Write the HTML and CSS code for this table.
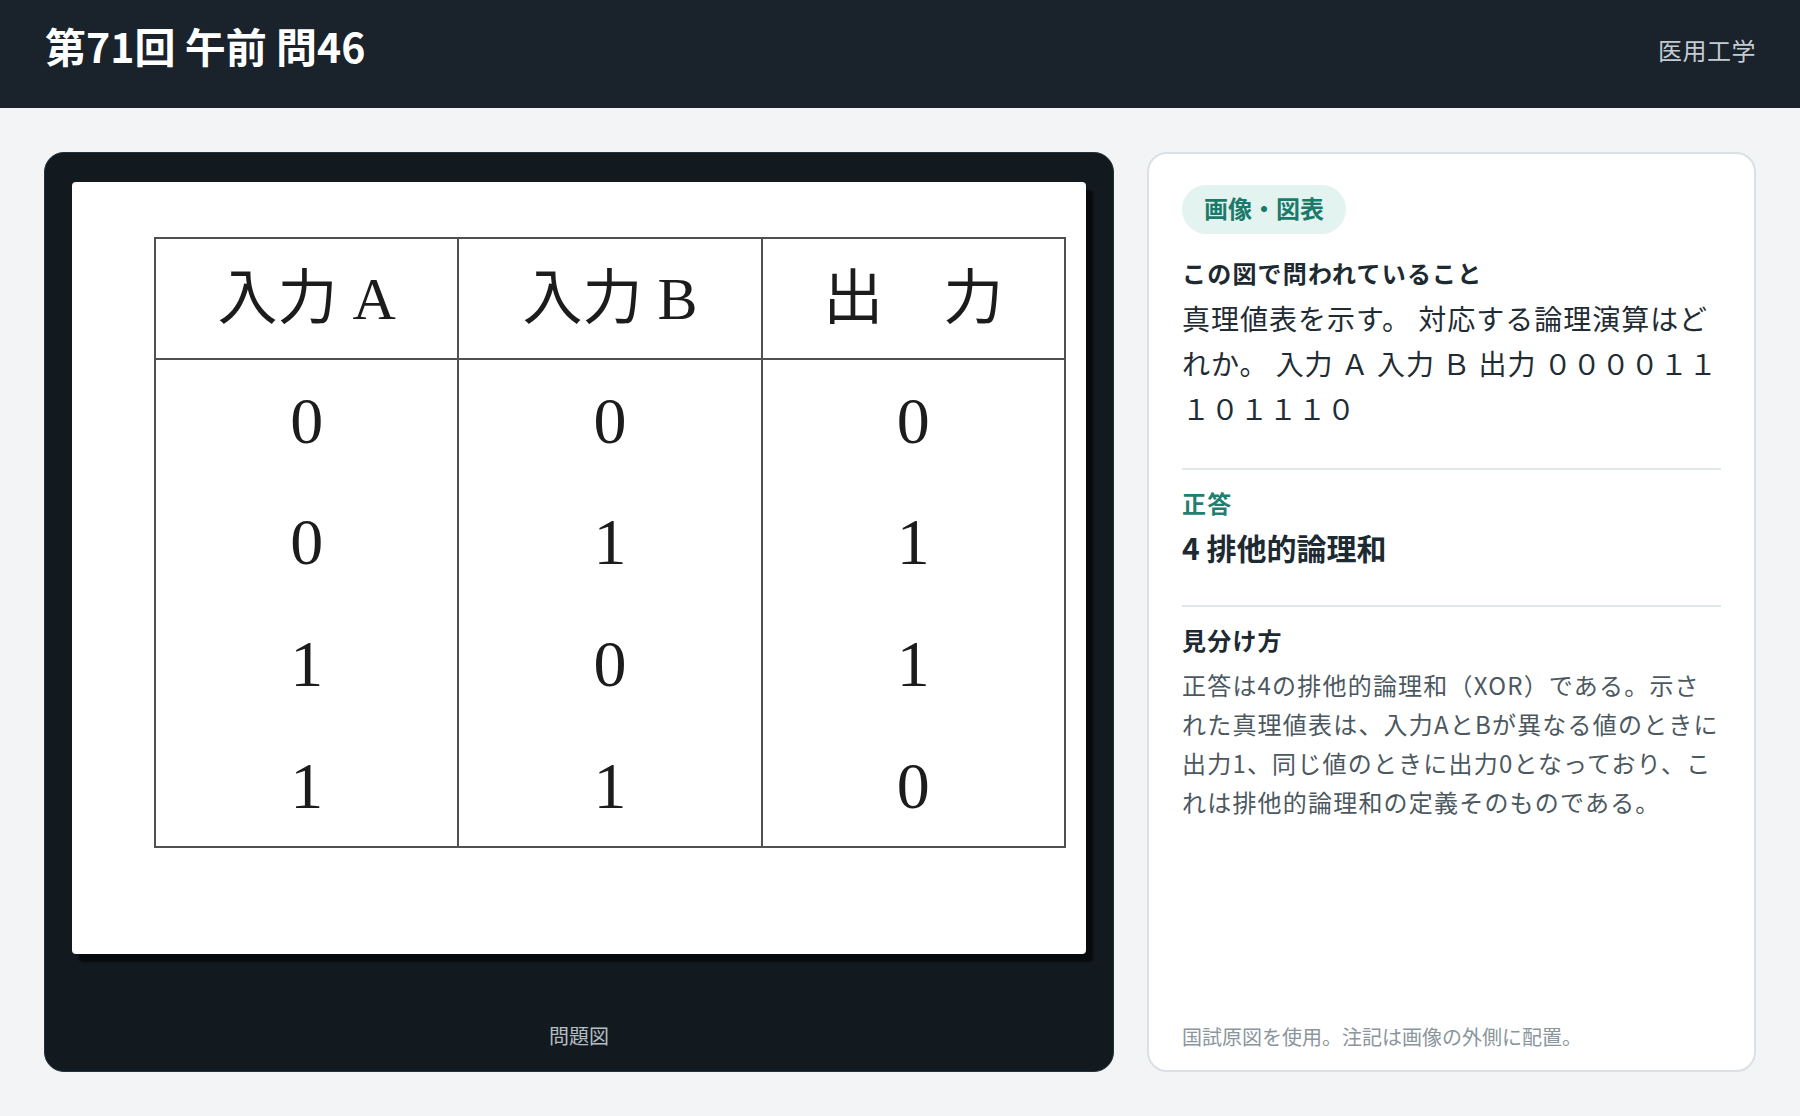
FILE: index.html
```html
<!DOCTYPE html>
<html lang="ja">
<head>
<meta charset="utf-8">
<title>第71回 午前 問46</title>
<link rel="stylesheet" href="styles.css">
</head>
<body>
<header class="topbar">
  <h1 class="title">第71回 午前 問46</h1>
  <span class="subject">医用工学</span>
</header>
<main class="main">
  <section class="viewer">
    <figure class="figure">
      <div class="sheet">
        <table class="truth">
          <thead>
            <tr><th>入力 A</th><th>入力 B</th><th>出　力</th></tr>
          </thead>
          <tbody>
            <tr><td>0</td><td>0</td><td>0</td></tr>
            <tr><td>0</td><td>1</td><td>1</td></tr>
            <tr><td>1</td><td>0</td><td>1</td></tr>
            <tr><td>1</td><td>1</td><td>0</td></tr>
          </tbody>
        </table>
      </div>
      <figcaption class="caption">問題図</figcaption>
    </figure>
  </section>
  <aside class="panel">
    <span class="badge">画像・図表</span>
    <h2 class="label">この図で問われていること</h2>
    <p class="question">真理値表を示す。 対応する論理演算はどれか。 入力 Ａ 入力 Ｂ 出力 ００００１１１０１１１０</p>
    <div class="section">
      <h2 class="label label-accent">正答</h2>
      <p class="answer">4 排他的論理和</p>
    </div>
    <div class="section">
      <h2 class="label">見分け方</h2>
      <p class="explain">正答は4の排他的論理和（XOR）である。示された真理値表は、入力AとBが異なる値のときに出力1、同じ値のときに出力0となっており、これは排他的論理和の定義そのものである。</p>
    </div>
    <p class="note">国試原図を使用。注記は画像の外側に配置。</p>
  </aside>
</main>
</body>
</html>
```
FILE: styles.css
```css
* { box-sizing: border-box; }
html, body { margin: 0; height: 100%; }
body {
  font-family: "Noto Sans CJK JP", "Noto Sans", sans-serif;
  background: #f2f4f6;
  display: flex;
  flex-direction: column;
  height: 100vh;
}
.topbar {
  flex: none;
  height: 108px;
  background: #1a232b;
  display: flex;
  align-items: center;
  justify-content: space-between;
  padding: 0 44px 0 45px;
}
.title {
  margin: 0 0 16px;
  font-size: 41px;
  font-weight: 700;
  line-height: 1.2;
  color: #ffffff;
}
.subject {
  font-size: 24px;
  line-height: 1.2;
  color: #c3ccd2;
  margin-bottom: 7px;
  letter-spacing: 0.02em;
}
.main {
  flex: 1;
  min-height: 0;
  display: grid;
  grid-template-columns: minmax(0, 1fr) 609px;
  gap: 33px;
  padding: 44px;
}
.viewer {
  background: #131a1f;
  border: 1px solid #25313a;
  border-radius: 20px;
  padding: 29px 27px 20px;
  display: flex;
  flex-direction: column;
}
.figure {
  margin: 0;
  flex: 1;
  display: flex;
  flex-direction: column;
}
.sheet {
  height: 772px;
  background: #ffffff;
  border-radius: 4px;
  box-shadow: 7px 8px 2px rgba(0, 0, 0, 0.6);
  padding: 55px 0 0 82px;
}
.truth {
  border-collapse: collapse;
  table-layout: fixed;
  width: 912px;
  border: 2px solid #505050;
}
.truth th, .truth td {
  border-left: 2px solid #505050;
  border-right: 2px solid #505050;
  text-align: center;
  vertical-align: middle;
  padding: 0;
  font-family: "Liberation Serif", "Noto Sans CJK JP", serif;
  font-weight: 400;
  color: #1c1c1c;
  line-height: 1;
}
.truth th {
  height: 121px;
  font-size: 60px;
  border-bottom: 2px solid #505050;
}
.truth td { height: 122px; font-size: 66px; }
.caption {
  margin-top: auto;
  text-align: center;
  font-size: 20px;
  line-height: 30px;
  color: #b4bec4;
}
.panel {
  background: #ffffff;
  border: 2px solid #d9e1e5;
  border-radius: 20px;
  padding: 31px 33px 18px;
  display: flex;
  flex-direction: column;
}
.badge {
  align-self: flex-start;
  height: 49px;
  line-height: 45px;
  padding: 0 22px 4px;
  border-radius: 999px;
  background: #e3f3ef;
  color: #1c7a6b;
  font-weight: 700;
  font-size: 24px;
}
.label {
  margin: 20px 0 4px;
  font-size: 24px;
  line-height: 1.6;
  font-weight: 700;
  color: #1d2a32;
  letter-spacing: 0.05em;
}
.label-accent { color: #1f7f70; }
.question {
  margin: 0;
  font-size: 28px;
  line-height: 1.6;
  color: #1f2c34;
  letter-spacing: 0.035em;
}
.section {
  margin-top: 37px;
  padding-top: 14px;
  border-top: 2px solid #e1e8eb;
}
.section .label { margin-top: 0; }
.answer {
  margin: 1px 0 0;
  font-size: 30px;
  font-weight: 700;
  line-height: 1.4;
  color: #1d2a32;
}
.explain {
  margin: 5px 0 0;
  font-size: 24px;
  line-height: 39px;
  color: #4c585f;
  letter-spacing: 0.05em;
}
.note {
  margin: auto 0 0;
  font-size: 20px;
  line-height: 30px;
  color: #8b969c;
}
```
